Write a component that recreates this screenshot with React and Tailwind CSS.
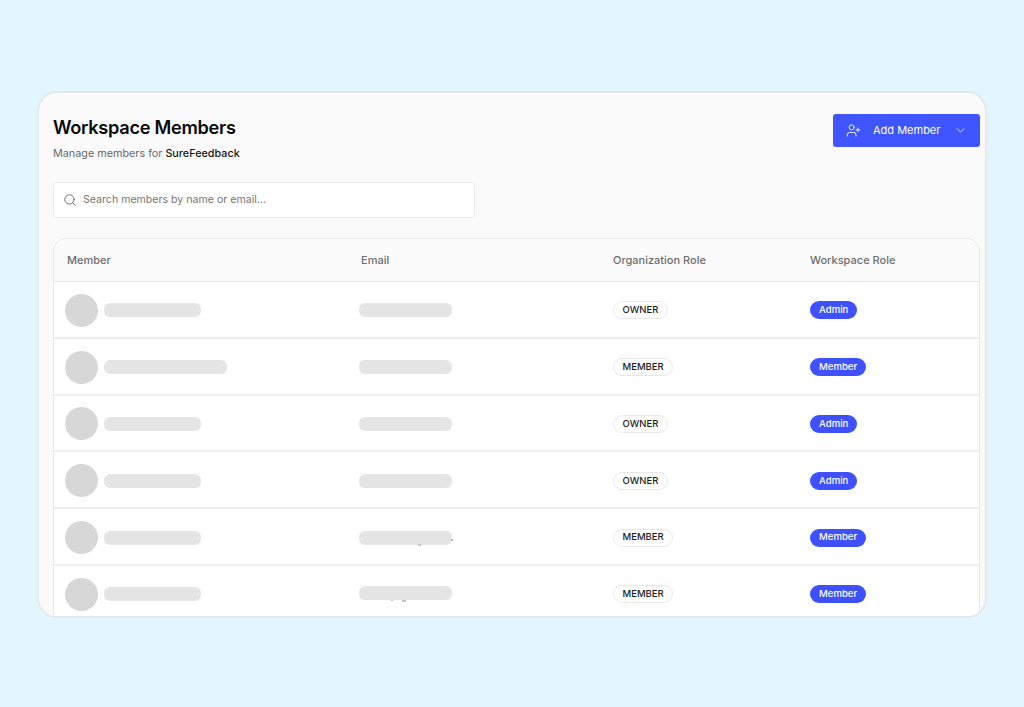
import { Search, UserPlus, ChevronDown } from 'lucide-react';

const members = [
    { nameWidth: 'w-[97px]', org: 'OWNER', role: 'Admin' },
    { nameWidth: 'w-[123px]', org: 'MEMBER', role: 'Member' },
    { nameWidth: 'w-[97px]', org: 'OWNER', role: 'Admin' },
    { nameWidth: 'w-[97px]', org: 'OWNER', role: 'Admin' },
    { nameWidth: 'w-[97px]', org: 'MEMBER', role: 'Member', specks: 'row5' },
    { nameWidth: 'w-[97px]', org: 'MEMBER', role: 'Member', specks: 'row6' },
];

const gridCols = 'grid grid-cols-[294px_252px_197px_1fr]';

const MemberRow = ({ member }) => (
    <div className={`${gridCols} h-[56.8px] shrink-0 items-center border-b-2 border-[#eeeeee] pl-[13px] pt-[2px]`}>
        <div className="-ml-[2px] flex items-center gap-[6px]">
            <div className="h-[33px] w-[33px] rounded-full bg-[#d7d7d7]" />
            <div className={`h-[14px] rounded-[6px] bg-[#e5e5e5] ${member.nameWidth}`} />
        </div>
        <div className="-ml-[2px]">
            <div className={`relative h-[14px] w-[93px] rounded-[6px] bg-[#e5e5e5] ${member.specks === 'row6' ? '-mt-[2px]' : ''}`}>
                {member.specks === 'row5' && (
                    <>
                        <span className="absolute left-[59px] top-[13px] h-[2px] w-[3px] bg-[#c4c4c4]" />
                        <span className="absolute left-[92px] top-[8px] h-[2px] w-[2px] bg-[#b8b8b8]" />
                    </>
                )}
                {member.specks === 'row6' && (
                    <>
                        <span className="absolute left-[32px] top-[14px] h-[1px] w-[2px] bg-[#c4c4c4]" />
                        <span className="absolute left-[43px] top-[14px] h-[2px] w-[4px] bg-[#c4c4c4]" />
                    </>
                )}
            </div>
        </div>
        <div className="flex">
            <span className="flex h-[18px] items-center rounded-full border border-[#e8e8e8] bg-white px-[8.5px] text-[9.5px] font-medium text-[#1c1c1c]">
                {member.org}
            </span>
        </div>
        <div className="flex">
            <span className="flex h-[18px] items-center rounded-full bg-[#3f51ff] px-[9px] text-[9.6px] font-medium text-white">
                {member.role}
            </span>
        </div>
    </div>
);

const App = () => {
    return (
        <div className="h-[707px] overflow-hidden bg-[#e1f6ff] pt-[91px] font-['Inter',sans-serif]">
            <div className="ml-[37px] h-[527px] w-[950px] overflow-hidden rounded-[20px] border-2 border-[#e6e9ec] bg-[#fafafa] pl-[14px] pr-[5px] pt-[20px]">
                {/* Header */}
                <div className="flex items-start justify-between">
                    <div>
                        <h1 className="mt-[1px] text-[18.2px] leading-[26px] font-semibold tracking-[-0.3px] text-[#0a0a0a]">Workspace Members</h1>
                        <p className="mt-[6px] text-[10.8px] leading-[16px] text-[#6b6b6b]">
                            Manage members for <span className="font-medium text-[#171717]">SureFeedback</span>
                        </p>
                    </div>
                    <button className="mt-[1px] flex h-[33px] w-[147px] items-center rounded-[3px] bg-[#3f55ff] pl-[13px] text-[11px] text-white">
                        <UserPlus size={15} strokeWidth={1.5} />
                        <span className="ml-[12px]">Add Member</span>
                        <ChevronDown size={13} strokeWidth={1.5} className="ml-[14px]" />
                    </button>
                </div>

                {/* Search */}
                <div className="mt-[20px] flex h-[36px] w-[422px] items-center rounded-[3px] border border-[#ebebeb] bg-white pl-[9px]">
                    <Search size={14} strokeWidth={1.5} className="text-[#5f5f5f]" />
                    <span className="ml-[6px] text-[10.6px] text-[#777777]">Search members by name or email...</span>
                </div>

                {/* Members table */}
                <div className="mt-[20px] flex h-[400px] w-[927px] flex-col overflow-hidden rounded-t-[14px] border-x border-t border-[#e8e8e8] bg-white">
                    <div className={`${gridCols} h-[43px] shrink-0 items-center border-b border-[#e8e8e8] bg-[#fbfbfb] pl-[13px] text-[11px] font-medium text-[#6e6e6e]`}>
                        <span>Member</span>
                        <span>Email</span>
                        <span>Organization Role</span>
                        <span>Workspace Role</span>
                    </div>
                    {members.map((member, i) => (
                        <MemberRow key={i} member={member} />
                    ))}
                </div>
            </div>
        </div>
    );
};

export default App;
